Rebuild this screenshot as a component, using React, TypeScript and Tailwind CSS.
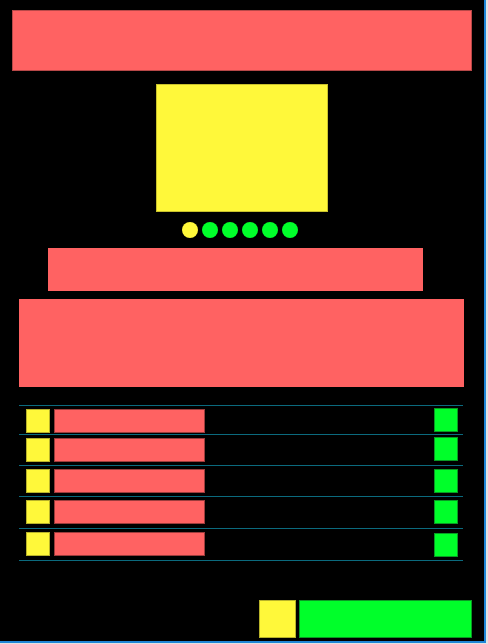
const rows = [
  { h: "h-[29px]", g: "mt-[-1px]" },
  { h: "h-[31px]", g: "mt-[-1px]" },
  { h: "h-[31px]", g: "mt-0" },
  { h: "h-[32px]", g: "mt-0" },
  { h: "h-[32px]", g: "mt-[1px]" },
];

export default function App() {
  return (
    <div className="min-h-screen bg-[#e2e2e2]">
      <div className="w-[486px] h-[643px] bg-black border-r-2 border-b-2 border-[#1f86d6] flex flex-col">
        <div className="mt-[10px] mx-[12px] h-[61px] bg-[#ff6262] border border-[#b84848]" />

        <div className="mt-[13px] self-center w-[172px] h-[128px] bg-[#fff83a] border border-[#c9c22c]" />

        <div className="mt-[10px] flex justify-center gap-[4px] pr-[4px]">
          {Array.from({ length: 6 }).map((_, i) => (
            <div
              key={i}
              className={`w-[16px] h-[16px] rounded-full ${i === 0 ? "bg-[#fff83a]" : "bg-[#00ff2a]"}`}
            />
          ))}
        </div>

        <div className="mt-[10px] ml-[48px] w-[375px] h-[43px] bg-[#ff6262]" />

        <div className="mt-[8px] ml-[19px] w-[445px] h-[88px] bg-[#ff6262]" />

        <div className="mt-[18px] ml-[19px] w-[444px] border-t border-[#0b6a7e]">
          {rows.map((r, i) => (
            <div key={i} className={`${r.h} flex items-start pt-[3px] border-b border-[#0b6a7e]`}>
              <div className="ml-[7px] w-[24px] h-[24px] bg-[#fff83a] border border-[#b8b22a]" />
              <div className="ml-[4px] w-[151px] h-[24px] bg-[#ff6262] border border-[#9c3c3c]" />
              <div className={`ml-auto mr-[5px] ${r.g} w-[24px] h-[24px] bg-[#00ff2a] border border-[#0a9a24]`} />
            </div>
          ))}
        </div>

        <div className="mt-[39px] ml-[259px] flex gap-[3px]">
          <div className="w-[37px] h-[38px] bg-[#fff83a] border border-[#b8b22a]" />
          <div className="w-[173px] h-[38px] bg-[#00ff2a] border border-[#0a9a24]" />
        </div>
      </div>
    </div>
  );
}
